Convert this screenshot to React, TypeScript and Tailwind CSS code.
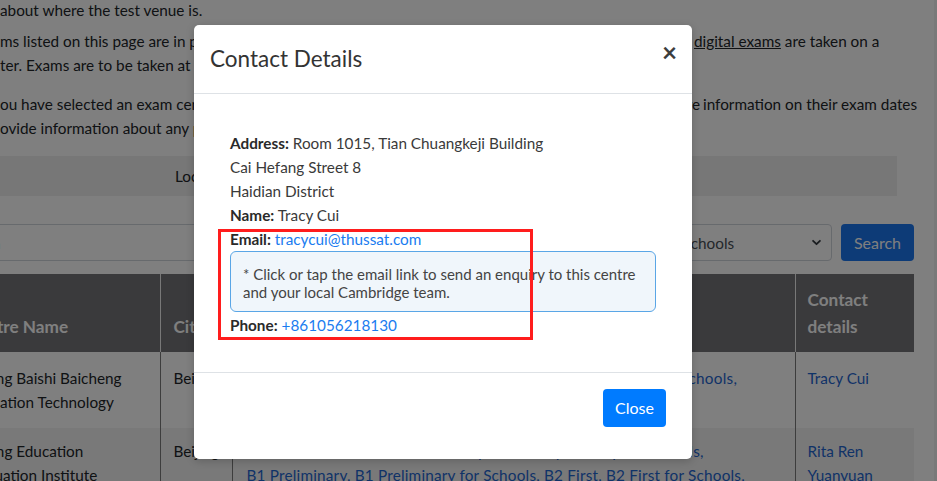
import type { ReactNode } from "react"

function Line({
  pre,
  start,
  end,
  endWidth,
  right,
}: {
  pre: string
  start: string
  end?: string
  endWidth?: string
  right?: ReactNode
}) {
  return (
    <div className="flex h-[24px] whitespace-nowrap">
      <span className="flex w-[45px] shrink-0 justify-end overflow-hidden">{pre}</span>
      <span className="w-[355px] shrink-0 overflow-hidden">{start}</span>
      {end && (
        <span className={`flex shrink-0 justify-end overflow-hidden ${endWidth}`}>{end}</span>
      )}
      {right}
    </div>
  )
}

const link = "text-[#1f66d0]"

function BackgroundPage() {
  return (
    <div className="ml-[-45px] mt-[-2px] w-[959px] text-[15.3px] leading-[24px] text-[#212529]">
      <div className="mb-[7px]">
        <Line pre="details " start="about where the test venue is." />
      </div>
      <div className="mb-[15px]">
        <Line
          pre="All exa"
          start="ms listed on this page are in paper-based and digital formats."
          end="Paper-based exams are taken with pen and paper, and"
          endWidth="w-[335px]"
          right={
            <span className="ml-[4px]">
              <span className="underline">digital exams</span> are taken on a
            </span>
          }
        />
        <Line pre="compu" start="ter. Exams are to be taken at an authorised Cambridge exam centre." />
      </div>
      <div>
        <Line
          pre="Once y"
          start="ou have selected an exam centre, please contact them directly,"
          end="as the centre will be able to provide more"
          endWidth="w-[345px]"
          right={<span className="ml-[3px]">information on their exam dates</span>}
        />
        <Line pre="and pr" start="ovide information about any preparation courses they offer." />
      </div>

      <div className="mr-[17px] mt-[16px] flex h-[40px] items-center bg-[#eeeeee] pl-[220px]">
        Location
      </div>

      <div className="mt-[28px] flex h-[37px] gap-[9px]">
        <div className="flex flex-1 items-center rounded-[4px] border border-[#ced4da] bg-white pl-[12px] text-[#1f3f8f]">
          Xi'an
        </div>
        <div className="flex w-[242px] items-center justify-between rounded-[4px] border border-[#ced4da] bg-white pl-[12px] pr-[9px] text-[#495057]">
          <span>B2 First for Schools</span>
          <svg width="11" height="11" viewBox="0 0 16 16" fill="none" stroke="#343a40" strokeWidth="2.6" strokeLinecap="round" strokeLinejoin="round">
            <path d="M3 5.5l5 5 5-5" />
          </svg>
        </div>
        <div className="flex w-[73px] items-center justify-center rounded-[4px] bg-[#1a76ee] text-[16px] text-white">
          Search
        </div>
      </div>

      <table className="mt-[13px] w-[959px] table-fixed border-collapse">
        <colgroup>
          <col className="w-[205px]" />
          <col className="w-[72px]" />
          <col className="w-[563px]" />
          <col className="w-[119px]" />
        </colgroup>
        <thead>
          <tr className="bg-[#747478] text-left align-bottom text-[17.2px] font-bold leading-[27px] text-white">
            <th className="px-[12px] pb-[12px] pt-[12px]">Centre Name</th>
            <th className="border-l border-[#f0f0f0] px-[13px] pb-[12px] pt-[12px]">City</th>
            <th className="border-l border-[#f0f0f0] px-[13px] pb-[12px] pt-[12px]">Exams</th>
            <th className="border-l border-[#f0f0f0] px-[12px] pb-[12px] pt-[12px]">Contact details</th>
          </tr>
        </thead>
        <tbody className="align-top">
          <tr className="bg-white">
            <td className="px-[12px] py-[14px]">Beijing Baishi Baicheng Education Technology</td>
            <td className="border-l border-[#7a7a7a] px-[13px] py-[14px]">Beijing</td>
            <td className={`border-l border-[#7a7a7a] px-[14px] py-[14px] ${link}`}>
              <div className="whitespace-nowrap tracking-[0.24px]">A2 Key, A2 Key for Schools, B1 Preliminary, B1 Preliminary for Schools,</div>
              <div className="whitespace-nowrap">B2 First, B2 First for Schools</div>
            </td>
            <td className={`border-l border-[#7a7a7a] px-[12px] py-[14px] ${link}`}>Tracy Cui</td>
          </tr>
          <tr className="bg-[#f3f3f3]">
            <td className="px-[12px] pb-[12px] pt-[11px]">Beijing Education Evaluation Institute</td>
            <td className="border-l border-[#7a7a7a] px-[13px] pb-[12px] pt-[11px]">Beijing</td>
            <td className={`border-l border-[#7a7a7a] px-[14px] pb-[12px] pt-[11px] ${link}`}>
              <div className="whitespace-nowrap tracking-[0.21px]">Pre A1 Starters, A1 Movers, A2 Flyers, A2 Key, A2 Key for Schools,</div>
              <div className="whitespace-nowrap tracking-[0.2px]">B1 Preliminary, B1 Preliminary for Schools, B2 First, B2 First for Schools,</div>
            </td>
            <td className={`border-l border-[#7a7a7a] px-[12px] pb-[12px] pt-[11px] ${link}`}>Rita Ren Yuanyuan</td>
          </tr>
        </tbody>
      </table>
    </div>
  )
}

function ContactModal() {
  return (
    <div className="absolute left-[194px] top-[25px] w-[498px] rounded-[5px] bg-white text-[#212529] shadow-[0_2px_8px_rgba(0,0,0,0.2)]">
      <div className="flex items-start justify-between border-b border-[#dee2e6] px-[16px] py-[16px]">
        <h5 className="text-[22.5px] leading-[36px] text-[#333]">Contact Details</h5>
        <button className="mr-[-1px] mt-[-2px] text-[26px] font-bold leading-none text-[#3d3d3d]">×</button>
      </div>

      <div className="p-[16px]">
        <div className="px-[20px] pb-[19px] pt-[21px] text-[15.3px] leading-[24px] text-[#3a3a3a]">
          <div>
            <b className="text-[#2a2a2a]">Address:</b> Room 1015, Tian Chuangkeji Building
          </div>
          <div>Cai Hefang Street 8</div>
          <div>Haidian District</div>
          <div>
            <b className="text-[#2a2a2a]">Name:</b> Tracy Cui
          </div>
          <div>
            <b className="text-[#2a2a2a]">Email:</b> <a className="text-[#1a7cf0]">tracycui@thussat.com</a>
          </div>
          <div className="rounded-[6px] border border-[#5aa6e6] bg-[#f0f6fb] px-[12px] pb-[10px] pt-[13px] text-[15px] leading-[18px] text-[#444]">
            * Click or tap the email link to send an enquiry to this centre and your local Cambridge team.
          </div>
          <div className="mt-[1px]">
            <b className="text-[#2a2a2a]">Phone:</b> <a className="text-[#1a7cf0]">+861056218130</a>
          </div>
        </div>
      </div>

      <div className="flex justify-end border-t border-[#dee2e6] pb-[32px] pr-[26px] pt-[16px]">
        <button className="h-[38px] rounded-[4px] bg-[#007bff] px-[12px] text-[16px] text-white">Close</button>
      </div>

      {/* highlight drawn on the screenshot */}
      <div className="pointer-events-none absolute left-[24px] top-[204px] h-[111px] w-[315px] border-[3px] border-[#ff1d1d]" />
    </div>
  )
}

export default function App() {
  return (
    <div className="relative h-[481px] w-full overflow-hidden bg-white font-['Lato',sans-serif]">
      <div className="flex h-full">
        <div className="flex-1 overflow-hidden">
          <BackgroundPage />
        </div>
        <div className="w-[3px] bg-[#f3f3f3]" />
      </div>
      <div className="absolute inset-0 bg-black/50" />
      <ContactModal />
    </div>
  )
}
